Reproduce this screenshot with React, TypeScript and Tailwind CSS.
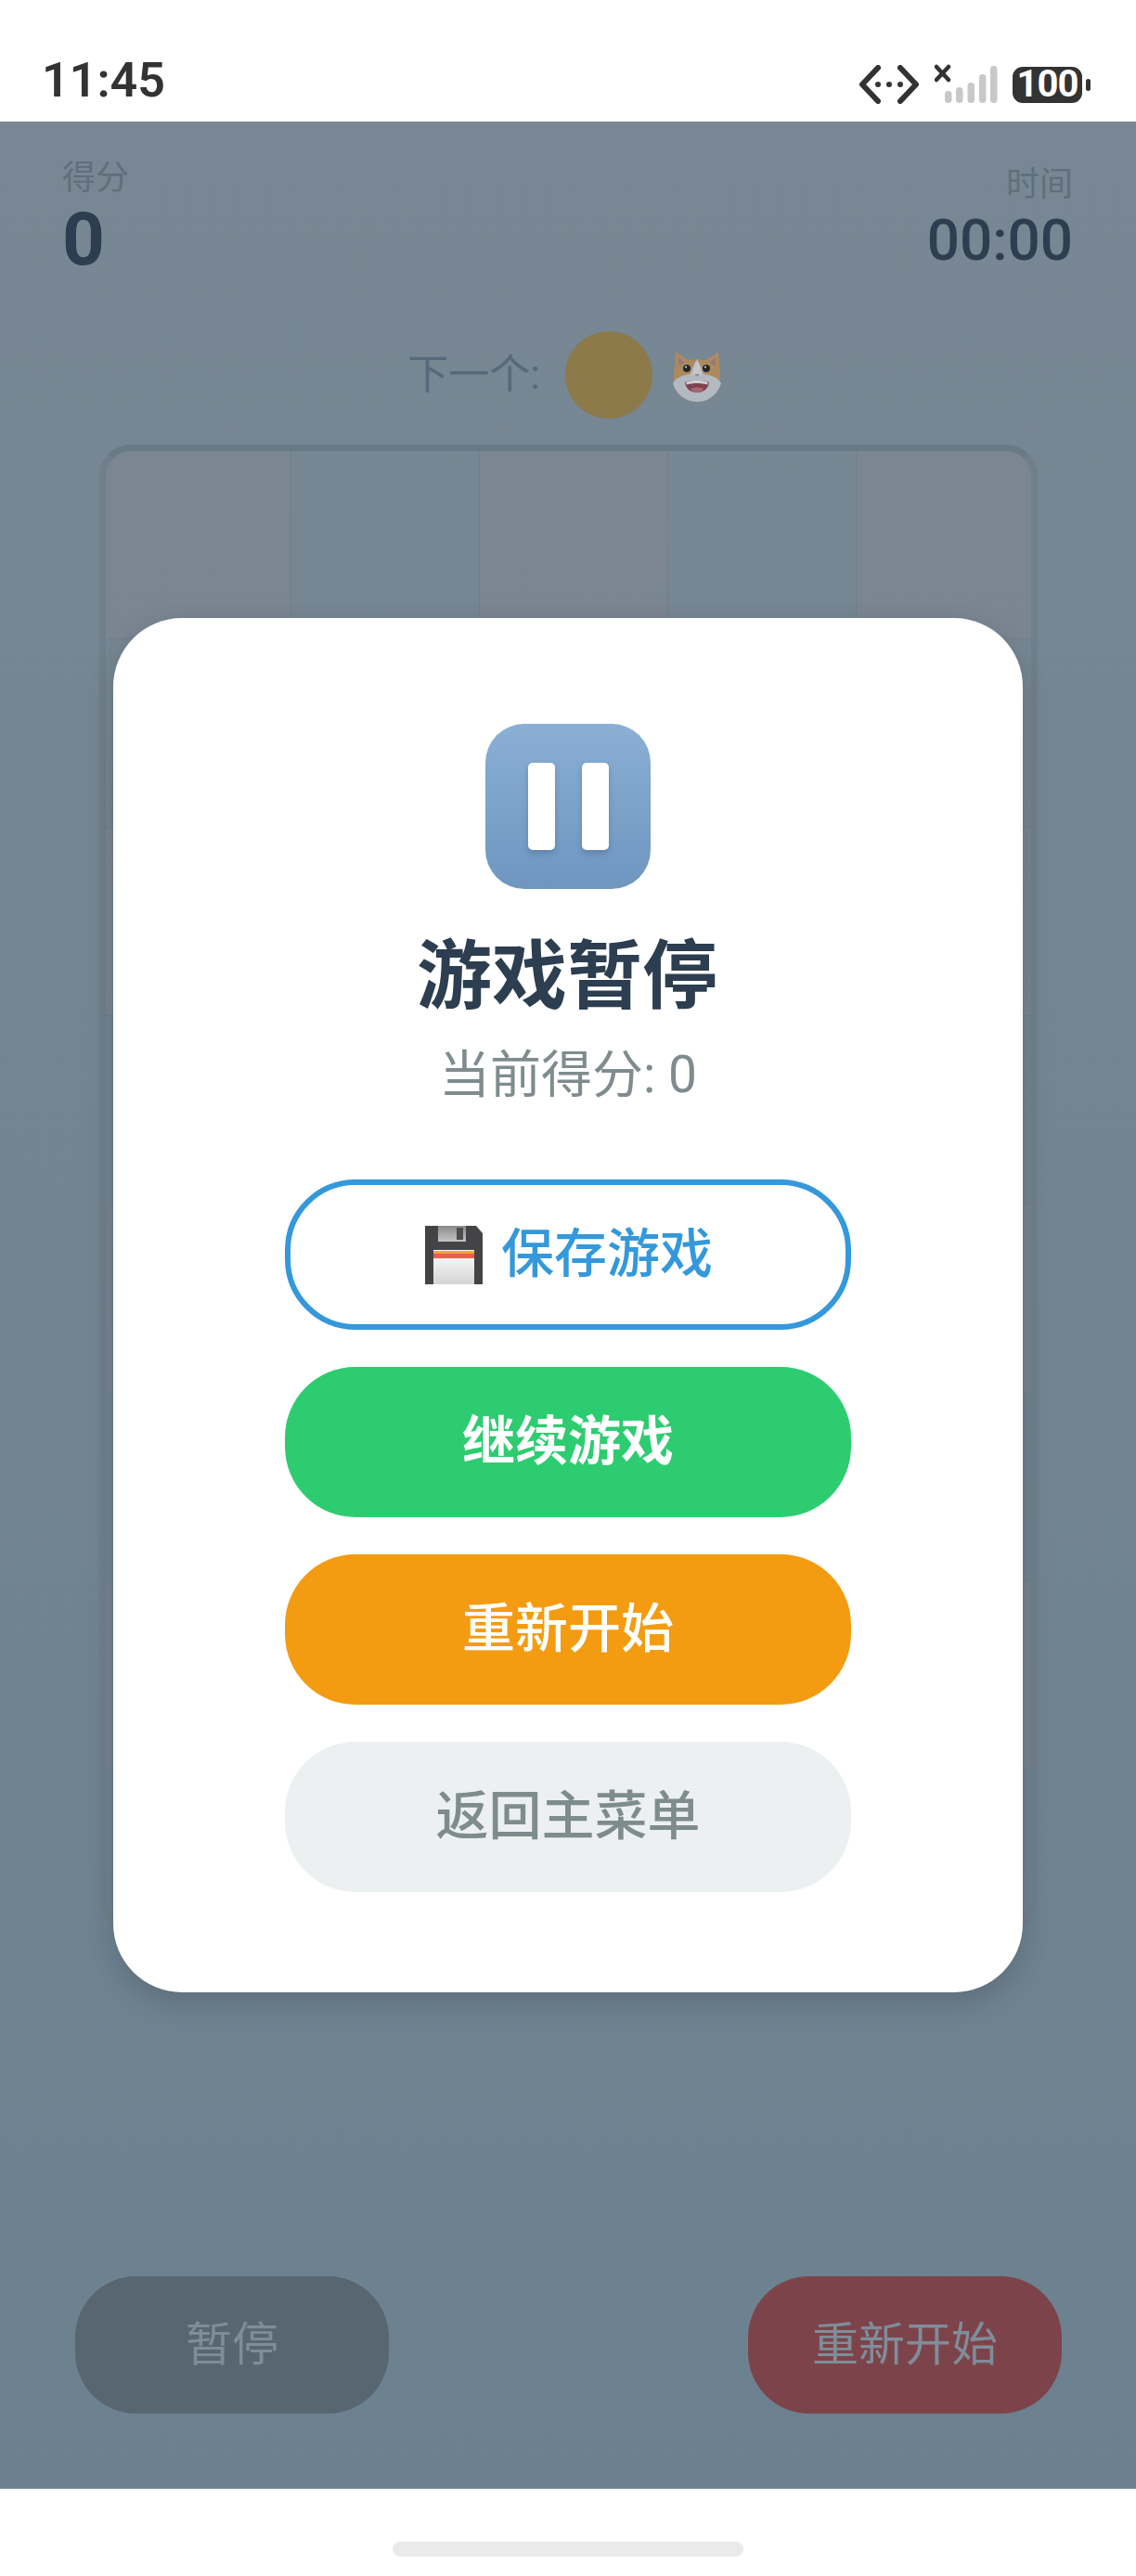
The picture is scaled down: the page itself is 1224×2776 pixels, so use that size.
import React from 'react';

const ROWS = 8;
const COLS = 5;

// status bar glyphs
const LinkIcon = () => (
  <svg width="66" height="42" viewBox="0 0 66 42" fill="none" stroke="#333" strokeWidth="6" strokeLinecap="round" strokeLinejoin="round">
    <path d="M21 3 4 21l17 18" />
    <path d="M45 3l17 18-17 18" />
    <circle cx="21" cy="21" r="3" fill="#333" stroke="none" />
    <circle cx="33" cy="21" r="3" fill="#333" stroke="none" />
    <circle cx="45" cy="21" r="3" fill="#333" stroke="none" />
  </svg>
);

const SignalIcon = () => (
  <svg width="72" height="44" viewBox="0 0 72 44">
    <path d="M2 3l13 14M15 3 2 17" stroke="#333" strokeWidth="4.5" strokeLinecap="round" />
    {[
      { x: 11, y: 29, h: 13 },
      { x: 23, y: 25, h: 17 },
      { x: 35.500, y: 20, h: 22 },
      { x: 48, y: 11, h: 31 },
      { x: 60, y: 2, h: 40 },
    ].map(b => (
      <rect key={b.x} x={b.x} y={b.y} width="7.500" height={b.h} rx="3.700" fill="#c8c8c8" />
    ))}
  </svg>
);

const Battery = () => (
  <div className="flex items-center gap-[4px]">
    <div className="w-[75px] h-[39px] rounded-[11px] bg-[#333] flex items-center justify-center text-white text-[40px] font-bold leading-none tracking-[-1px]">
      100
    </div>
    <div className="w-[5px] h-[13px] rounded-full bg-[#333]" />
  </div>
);

// dimmed cat emoji next to the preview ball
const CatFace = () => (
  <svg width="56" height="54" viewBox="0 0 56 54">
    <path d="M5 0 18 9h20L51 0l2 26H3z" fill="#ad8a5e" />
    <path d="M8 6l7 6-6 9z" fill="#97797a" />
    <path d="M48 6l-7 6 6 9z" fill="#97797a" />
    <ellipse cx="28" cy="29" rx="25" ry="21" fill="#ad8a5e" />
    <path d="M28 8c-4 6-5 11-7 16-8 1-16 4-19 10 3 11 13 20 26 20s23-9 26-20c-3-6-11-9-19-10-2-5-3-10-7-16z" fill="#b3b9c0" />
    <path d="M28 10c-3 5-4 10-5 15h10c-1-5-2-10-5-15z" fill="#c4c7ca" />
    <circle cx="17" cy="18" r="4" fill="#23262b" />
    <circle cx="38" cy="18" r="4" fill="#23262b" />
    <circle cx="16" cy="16.500" r="1.100" fill="#d5d8dc" />
    <circle cx="37" cy="16.500" r="1.100" fill="#d5d8dc" />
    <path d="M25 24h6l-3 3z" fill="#8d8f98" />
    <path d="M15 33c8-3 18-3 26 0-1 7-6 11-13 11s-12-4-13-11z" fill="#7d4250" />
    <path d="M16 33c8-3 16-3 24 0l-1 2.500c-7-2-15-2-22 0z" fill="#cfd1d4" />
    <path d="M21 40c4-2 10-2 14 0-2 3-4 4-7 4s-5-1-7-4z" fill="#a8646f" />
  </svg>
);

const FloppyIcon = () => (
  <svg width="62" height="63" viewBox="0 0 62 63" className="ml-[2px]">
    <defs>
      <linearGradient id="labelFill" x1="0" y1="0" x2="0" y2="1">
        <stop offset="0" stopColor="#ffffff" />
        <stop offset="1" stopColor="#d4d4d4" />
      </linearGradient>
      <linearGradient id="shutterFill" x1="0" y1="0" x2="0" y2="1">
        <stop offset="0" stopColor="#8a8a8a" />
        <stop offset="1" stopColor="#c4c4c4" />
      </linearGradient>
    </defs>
    <path d="M0 0h55l7 8v55H0z" fill="#444446" />
    <rect x="14" y="0" width="30" height="17" fill="url(#shutterFill)" />
    <rect x="34" y="2" width="7" height="13" fill="#4d4d4d" />
    <rect x="9" y="26" width="44" height="37" fill="url(#labelFill)" />
    <rect x="9" y="27" width="44" height="3" fill="#f0a437" />
    <rect x="9" y="30" width="44" height="5" fill="#e8604a" />
  </svg>
);

const PauseTile = () => (
  <div className="w-[178px] h-[178px] rounded-[42px] bg-gradient-to-b from-[#8bafd5] to-[#6e96bf] flex items-center justify-center gap-[29px]">
    <div className="w-[29px] h-[94px] rounded-[5px] bg-white shadow-[0_4px_6px_rgba(50,80,120,0.3)]" />
    <div className="w-[29px] h-[94px] rounded-[5px] bg-white shadow-[0_4px_6px_rgba(50,80,120,0.3)]" />
  </div>
);

const App: React.FC = () => {
  return (
    <div className="w-[1224px] h-[2776px] flex flex-col bg-white overflow-hidden font-['Roboto','Noto_Sans_CJK_SC',sans-serif]">
      {/* 状态栏 */}
      <div className="h-[131px] shrink-0 flex items-end justify-between pl-[45px] pr-[49px] pb-[18px]">
        <span className="text-[52px] leading-[50px] font-semibold text-[#333] mb-[1px]">11:45</span>
        <div className="flex items-center">
          <LinkIcon />
          <div className="ml-[16px] mr-[12px]">
            <SignalIcon />
          </div>
          <Battery />
        </div>
      </div>

      {/* 游戏界面（暂停时整体压暗） */}
      <main className="relative flex-1 flex flex-col bg-gradient-to-b from-[#788793] to-[#6c8190]">
        <div className="flex justify-between items-end pl-[67px] pr-[68px] pt-[37px]">
          <div>
            <div className="text-[36px] leading-[48px] text-[#5f6f7c]">得分</div>
            <div className="text-[80px] leading-[84px] font-bold text-[#2c3e50]">0</div>
          </div>
          <div className="text-right pb-[3px]">
            <div className="text-[36px] leading-[44px] text-[#5f6f7c]">时间</div>
            <div className="text-[62px] leading-[76px] font-medium text-[#2c3e50]">00:00</div>
          </div>
        </div>

        <div className="flex items-center justify-center mt-[57px] pr-[6px]">
          <span className="text-[44px] leading-none text-[#56697a]">下一个:</span>
          <div className="w-[94px] h-[94px] rounded-full bg-[#8c7a4a] ml-[27px]" />
          <div className="ml-[20px] mt-[4px]">
            <CatFace />
          </div>
        </div>

        {/* 棋盘 */}
        <div className="mt-[28px] ml-[107px] w-[1011px] h-[1602px] rounded-[34px] border-[7px] border-[#6f7f8b] border-t-[#697a87] overflow-hidden">
          <div className="grid grid-cols-[200px_203px_203px_203px_190px] auto-rows-[203px]">
            {Array.from({ length: ROWS * COLS }).map((_, i) => {
              const row = Math.floor(i / COLS);
              const col = i % COLS;
              return (
                <div
                  key={i}
                  className={`border-r border-b border-[#6f7f8b] ${(row + col) % 2 === 0 ? 'bg-[#aa8c92]/10' : 'bg-transparent'}`}
                />
              );
            })}
          </div>
        </div>

        <div className="mt-auto flex justify-between pl-[81px] pr-[80px] pb-[81px]">
          <div className="w-[338px] h-[148px] rounded-[66px] bg-[#576670] flex items-center justify-center text-[50px] text-[#7f8d99]">
            暂停
          </div>
          <div className="w-[338px] h-[148px] rounded-[66px] bg-[#7c444a] flex items-center justify-center text-[50px] text-[#7f8d99]">
            重新开始
          </div>
        </div>

        {/* 暂停弹窗 */}
        <div className="absolute inset-0 flex items-center justify-center">
          <div className="w-[980px] flex flex-col items-center bg-white rounded-[74px] pt-[114px] pb-[108px] shadow-[0_10px_30px_rgba(0,0,0,0.16)]">
            <PauseTile />
            <h2 className="mt-[54px] pr-[2px] text-[81px] leading-none font-bold text-[#2c3e50]">游戏暂停</h2>
            <p className="mt-[38px] text-[55px] leading-none text-[#7f8c8d]">当前得分: 0</p>

            <div className="mt-[85px] w-[610px] flex flex-col gap-[40px]">
              <div className="h-[162px] rounded-[76px] border-[6px] border-[#3498db] flex items-center justify-center gap-[20px] text-[57px] font-medium text-[#3498db]">
                <FloppyIcon />
                <span>保存游戏</span>
              </div>
              <div className="h-[162px] rounded-[76px] bg-[#2ecc71] flex items-center justify-center text-[57px] font-bold text-white">
                继续游戏
              </div>
              <div className="h-[162px] rounded-[76px] bg-[#f39c12] flex items-center justify-center text-[57px] font-medium text-white">
                重新开始
              </div>
              <div className="h-[162px] rounded-[76px] bg-[#ecf0f1] flex items-center justify-center text-[57px] font-medium text-[#7f8c8d]">
                返回主菜单
              </div>
            </div>
          </div>
        </div>
      </main>

      {/* 底部导航条 */}
      <div className="h-[94px] shrink-0 flex justify-center pt-[57px] bg-white">
        <div className="w-[378px] h-[16px] rounded-full bg-[#eaeaea]" />
      </div>
    </div>
  );
};

export default App;
